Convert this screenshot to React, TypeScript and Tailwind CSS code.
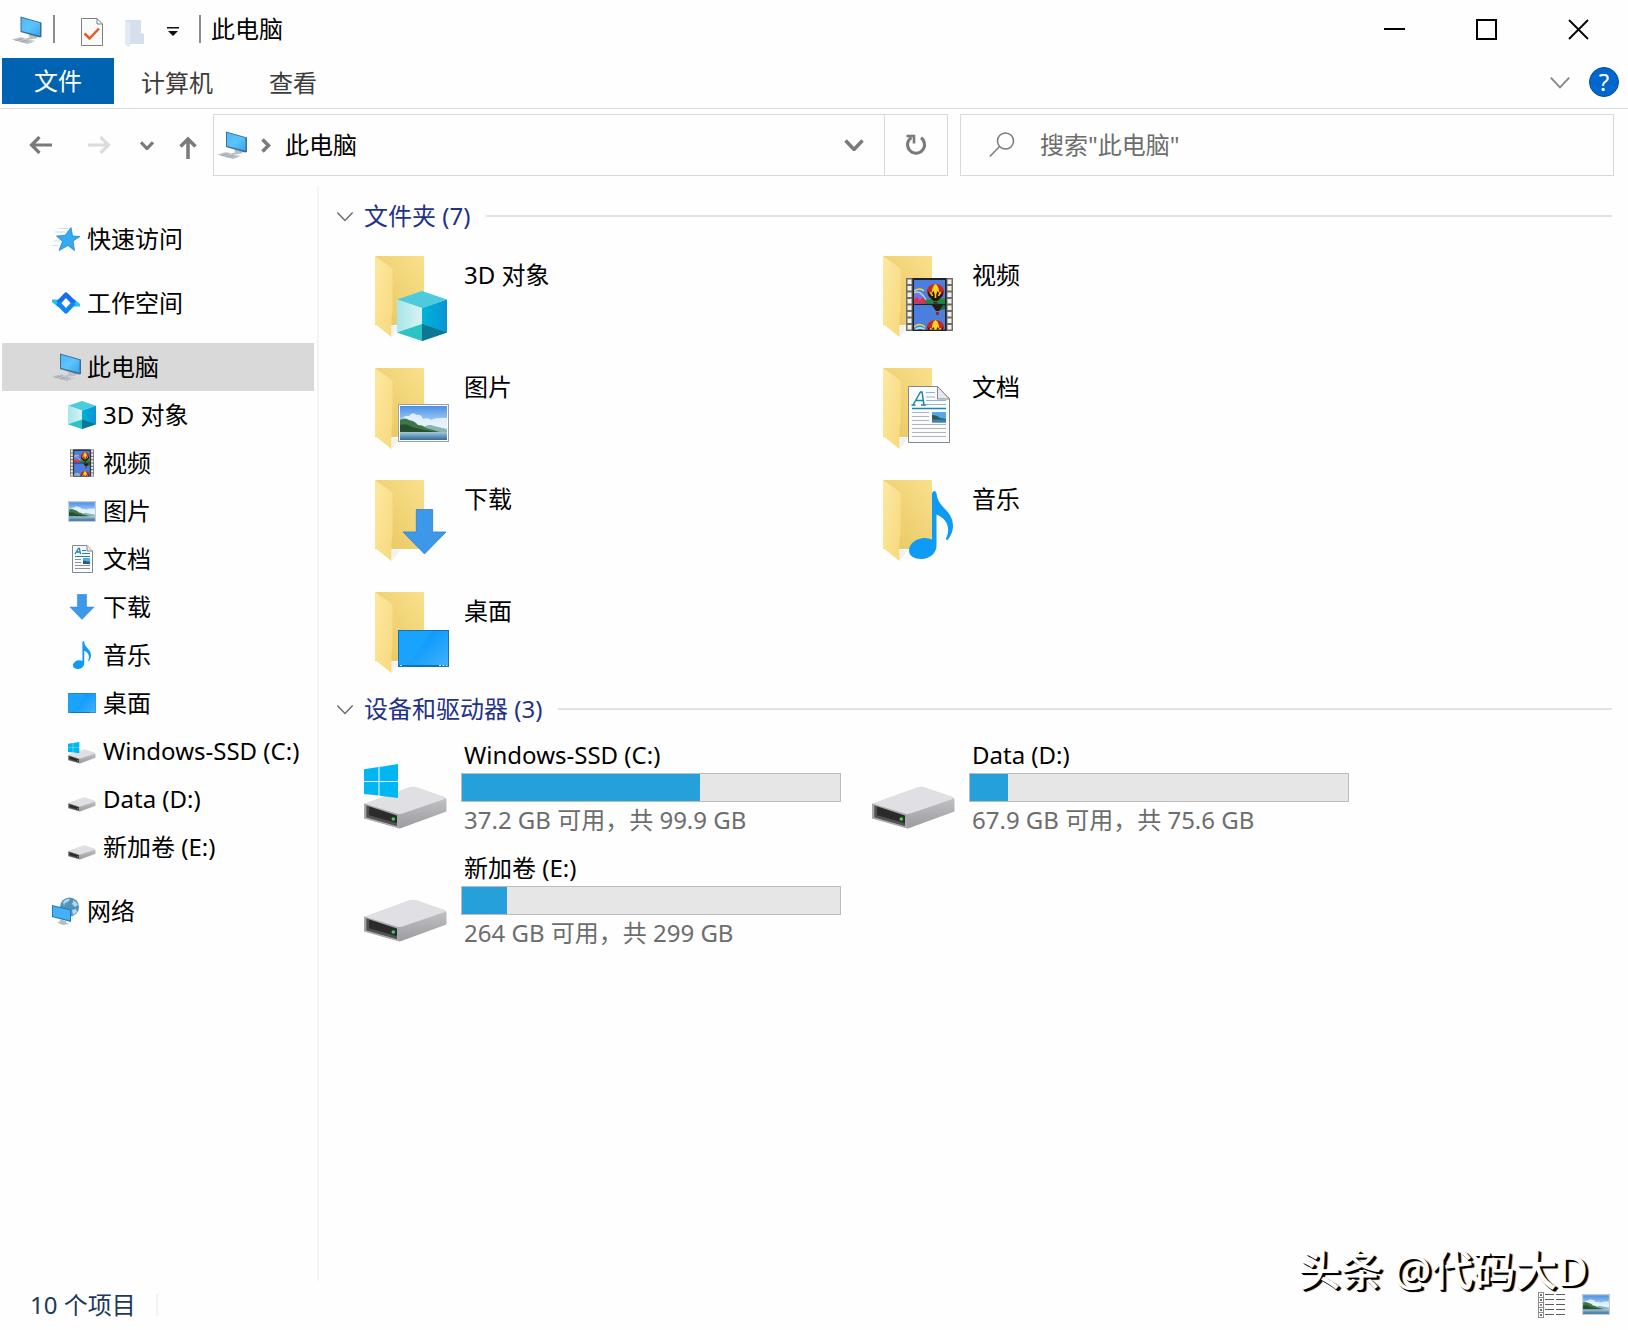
import type { ReactNode, SVGProps } from "react";

type Glyph = (props: SVGProps<SVGSVGElement>) => ReactNode;

// --- Glyphs -------------------------------------------------------------------

function PcGlyph(props: SVGProps<SVGSVGElement>) {
  return (
    <svg viewBox="0 0 30 28" {...props}>
      <defs>
        <linearGradient id="pc-screen" x1="0" y1="0" x2="1" y2="1">
          <stop offset="0" stopColor="#4fb8f7" />
          <stop offset="0.5" stopColor="#5cc4fb" />
          <stop offset="1" stopColor="#36a3ee" />
        </linearGradient>
      </defs>
      <path d="M17 18.500l9 2-1 2-8 1-3-1 4-1z" fill="#b9bfc4" />
      <path d="M9 .5l21 6V21l-2 .5-19-5.500z" fill="#3d6f93" />
      <path d="M10 1.800L28.500 7v12.800L10 15z" fill="url(#pc-screen)" />
      <path d="M0 23.500L9 21l15 4-8 3z" fill="#c9cdd1" />
      <path d="M3 23.700l14 3.600M6 22.800l14 3.600M4 24.700l8-2.400M9 26.100l8-2.400" stroke="#8f979e" strokeWidth=".5" />
    </svg>
  );
}

function CubeGlyph(props: SVGProps<SVGSVGElement>) {
  return (
    <svg viewBox="0 0 50 50" {...props}>
      <defs>
        <linearGradient id="cube-right" x1="0" y1="0" x2="1" y2="0">
          <stop offset="0" stopColor="#00b4d8" />
          <stop offset="1" stopColor="#0a93d6" />
        </linearGradient>
        <linearGradient id="cube-left" x1="0" y1="0" x2="1" y2="0">
          <stop offset="0" stopColor="#a6e6ea" />
          <stop offset="1" stopColor="#d8f3f2" />
        </linearGradient>
      </defs>
      <path d="M25 0l25 8.500L25 17 0 8.500z" fill="#4ccbdc" />
      <path d="M0 8.500L25 17v33L0 41.500z" fill="url(#cube-left)" />
      <path d="M50 8.500L25 17v33l25-8.500z" fill="url(#cube-right)" />
      <path d="M0 41.500L25 33v17z" fill="#2cc3c7" />
      <path d="M50 41.500L25 33v17z" fill="#0b7794" />
    </svg>
  );
}

function Balloon({ x, y }: { x: number; y: number }) {
  return (
    <g transform={`translate(${x} ${y})`}>
      <path d="M0 0c6 0 8.500 4 8.500 8S4 14 2.500 17h-5C-4 14-8.500 12-8.500 8S-6 0 0 0z" fill="#c8281e" />
      <path d="M0 0c4 2 5 11 1.500 17h-3C-5 11-4 2 0 0z" fill="#ffd21f" />
      <path d="M-8 6l3 5 3-4 2 5 2-5 3 4 3-5-1 6-5 5h-4l-5-5z" fill="#231714" />
      <path d="M-5 8l2 4M0 7v7M5 8l-2 4" stroke="#ffc928" strokeWidth="1.600" />
      <path d="M-2 18h4v3h-4z" fill="#3a1d12" />
    </g>
  );
}

function FilmGlyph(props: SVGProps<SVGSVGElement>) {
  const holes = [1.5, 8, 14.5, 21, 27.5, 34, 40.500, 47];
  return (
    <svg viewBox="0 0 47 53" {...props}>
      <rect width="47" height="53" fill="#6e6e6e" />
      <rect x="6.500" width="34" height="53" fill="#1e2226" />
      {holes.map((y) => (
        <g key={y} fill="#f3efe4">
          <rect x="1.500" y={y} width="4" height="4.500" />
          <rect x="41.500" y={y} width="4" height="4.500" />
        </g>
      ))}
      <svg x="8" y="2" width="31" height="23.500" viewBox="0 0 31 23.500">
        <rect width="31" height="24" fill="#4a7fe0" />
        <path d="M0 15c4-6 8-4 11 4v5H0z" fill="#8a6bd8" />
        <path d="M0 13q6-4 12 7" stroke="#8ce0e8" strokeWidth="1.500" fill="none" />
        <path d="M0 11q6-4 10 0" stroke="#f5d642" strokeWidth="1.500" fill="none" />
        <path d="M10 20l21-2v6H10z" fill="#1f8a3a" />
        <path d="M0 20l3-3 3 4 3-4 3 4v3H0z" fill="#d8344a" />
        <Balloon x={21.500} y={4} />
      </svg>
      <svg x="8" y="27" width="31" height="24.500" viewBox="0 0 31 24.500">
        <rect width="31" height="25" fill="#4a7fe0" />
        <path d="M17 0h14v4l-8 2z" fill="#1f6a3a" />
        <path d="M18 0h11l-4 6h-3z" fill="#2b1712" />
        <path d="M22 7h3v3h-3z" fill="#9b2a18" />
        <path d="M0 22q6-5 11 0" stroke="#f5d642" strokeWidth="1.500" fill="none" />
        <path d="M1 25q5-4 10 0" stroke="#a7f0d8" strokeWidth="2" fill="none" />
        <Balloon x={21.500} y={15} />
      </svg>
    </svg>
  );
}

function PhotoGlyph(props: SVGProps<SVGSVGElement>) {
  return (
    <svg viewBox="0 0 51 38" {...props}>
      <defs>
        <linearGradient id="photo-sky" x1="0" y1="0" x2="0" y2="1">
          <stop offset="0" stopColor="#4a90e6" />
          <stop offset="0.600" stopColor="#bfe0fa" />
        </linearGradient>
        <linearGradient id="photo-lake" x1="0" y1="0" x2="0" y2="1">
          <stop offset="0" stopColor="#a4c8dc" />
          <stop offset="1" stopColor="#2f6a98" />
        </linearGradient>
      </defs>
      <rect x=".5" y=".5" width="50" height="37" fill="#fff" stroke="#9ba1ac" />
      <rect x="2" y="2" width="47" height="34" fill="url(#photo-sky)" />
      <path d="M4 16q2-5 7-4 3-5 8-1 4-1 6 4 5-2 8 1 6-3 16-2v14H4z" fill="#eef6fd" opacity=".85" />
      <path d="M22 26q8-7 14-4l13 3v3H22z" fill="#86b5b4" />
      <path d="M2 16q5-3 9 0 6 1 9 5 5 0 8 3l14 4H2z" fill="#3f7548" />
      <path d="M2 21q6-2 12 2l12 3 12 2H2z" fill="#24502f" />
      <path d="M2 28h47v8H2z" fill="url(#photo-lake)" />
    </svg>
  );
}

function DocGlyph(props: SVGProps<SVGSVGElement>) {
  return (
    <svg viewBox="0 0 42 57" {...props}>
      <path d="M.5.5h29l12 12.500v43.500H.5z" fill="#fafbfc" stroke="#85898d" />
      <path d="M29.500.5V13h12z" fill="#e6e8ea" stroke="#85898d" />
      <path d="M5 19L12.500 6h1.500l2 13M7.500 14.500h8M3.500 19h4M13 19h5" fill="none" stroke="#1c84b8" strokeWidth="1.500" />
      <path d="M18 6.500h9M18 11h9M18 14.500h20M18 18.500h20" stroke="#8fb6d4" />
      <path d="M4 22.500h34" stroke="#1c84b8" strokeWidth="1.500" />
      <path d="M4 26.500h17M4 30.500h17M4 34.500h17M4 38.500h34M4 42.500h34M4 46.500h34M4 50.500h34" stroke="#b3b6b9" />
      <rect x="24" y="26" width="14" height="10.500" fill="#57a8e6" />
      <path d="M24 29q5 0 8 3l6 1v1H24z" fill="#2c5c50" />
      <path d="M24 33.500h14v3H24z" fill="#3f81ad" />
    </svg>
  );
}

// Fewer, heavier lines so the page still reads at tree size
function SmallDocGlyph(props: SVGProps<SVGSVGElement>) {
  return (
    <svg viewBox="0 0 21 28" {...props}>
      <path d="M.5.5H15l5.500 5.500v21.500H.5z" fill="#fafbfc" stroke="#85898d" />
      <path d="M15 .5V6h5.500" fill="#e6e8ea" stroke="#85898d" />
      <path d="M3 9l3.500-5.500h1L8.500 9M4.500 7h4" fill="none" stroke="#1c84b8" strokeWidth="1.300" />
      <path d="M10 5.500h4M10 8.500h8M3 11.500h15" stroke="#1c84b8" />
      <path d="M3 14.500h6M3 17.500h6M3 20.500h15M3 23.500h15" stroke="#8d9297" />
      <rect x="11" y="13" width="7" height="6" fill="#57a8e6" />
      <path d="M11 15.500l7 1.500v2h-7z" fill="#2c5c70" />
    </svg>
  );
}

function DownloadGlyph(props: SVGProps<SVGSVGElement>) {
  return (
    <svg viewBox="0 0 44 45" {...props}>
      <path d="M14 .5h16v22h13L22 44 1 22.500h13z" fill="#3d98ea" stroke="#2f7fd0" strokeWidth=".8" />
    </svg>
  );
}

function MusicGlyph(props: SVGProps<SVGSVGElement>) {
  return (
    <svg viewBox="0 0 44 68" {...props}>
      <path
        d="M23 2q2.500-4 4.500 0c1 15 16.500 17 16.500 33 0 6-3 11-5.500 14q-2 0-1.500-1.500c5-10 1-20-9.500-24V55c0 7-7 13-15 13C5 68 0 65 0 59.500 0 52 8 47 16 47q4 0 7 1.500z"
        fill="#0d9bf6"
      />
    </svg>
  );
}

function DesktopGlyph(props: SVGProps<SVGSVGElement>) {
  return (
    <svg viewBox="0 0 51 37" {...props}>
      <defs>
        <linearGradient id="desktop-glare" x1="0" y1="0" x2="1" y2="1">
          <stop offset="0.2" stopColor="#0497fc" />
          <stop offset="1" stopColor="#40b0fc" />
        </linearGradient>
      </defs>
      <rect width="51" height="37" fill="#1272b8" />
      <rect x="1" y="1" width="49" height="34" fill="#1aa3fd" />
      <path d="M34 1h16v34H11z" fill="url(#desktop-glare)" />
      <path d="M2 35.500h2M41 35.500h2M44.500 35.500h2M48 35.500h1.500" stroke="#d6edfc" />
    </svg>
  );
}

function DriveGlyph(props: SVGProps<SVGSVGElement>) {
  return (
    <svg viewBox="0 0 84 66" {...props}>
      <defs>
        <linearGradient id="drive-side" x1="0" y1="0" x2="0" y2="1">
          <stop offset="0" stopColor="#cfcfd1" />
          <stop offset="1" stopColor="#9c9ca0" />
        </linearGradient>
      </defs>
      <path d="M0 40L46 23.200q3-1 6 0L80 33q2.500 1 2.500 3v11.500L36 64.500 0 54z" fill="url(#drive-side)" />
      <path d="M0 40L46 23.200q3-1 6 0L80 33q2 1 0 2.200L40 49q-4 1.500-7 .8z" fill="#e0e0e4" />
      <path d="M0 39.500l35.500 11V64.500L0 54.500z" fill="#a9a9ab" />
      <path d="M2.500 41.500L33 51.500v10.500L2.500 53.300z" fill="#2b2b2b" />
      <path d="M2.500 41.500L5 42.300v9l28 8V62L2.500 53.300z" fill="#6d6d6d" opacity=".6" />
      <circle cx="29.300" cy="55" r="1.800" fill="#3fd84a" />
    </svg>
  );
}

function SystemDriveGlyph(props: SVGProps<SVGSVGElement>) {
  return (
    <svg viewBox="0 0 84 66" {...props}>
      <DriveGlyph width="84" height="66" />
      <path d="M0 5.300L14.500 3v14H0zM15.500 2.900L34 0v17H15.500zM0 18h14.500v13.600L0 30zM15.500 18H34v16l-18.500-2.300z" fill="#00b7f1" />
    </svg>
  );
}

function StarGlyph(props: SVGProps<SVGSVGElement>) {
  return (
    <svg viewBox="0 0 28 24" {...props}>
      <path d="M7 1.500h9M3 5h10M2 14h6M1 18.500h5" stroke="#b5ddf6" strokeWidth=".9" />
      <path d="M19 .5l1.500 8.500 7.500.500-7 4.500 1.500 9.500-6.500-5-9 5 3.500-9L4.500 9l8.500-.5z" fill="#35aaf0" stroke="#1e86cc" strokeWidth=".8" />
    </svg>
  );
}

function WorkspaceGlyph(props: SVGProps<SVGSVGElement>) {
  return (
    <svg viewBox="0 0 28 22" {...props}>
      <path d="M0 7.500h7l2.500 3.500-3.500 4L0 10z" fill="#27c3ee" />
      <path d="M28 14.500h-7L18.500 11 22 7l6 5z" fill="#27c3ee" />
      <path d="M4.500 9.500L12.500 1Q14-.5 15.500 1L24 9.500 20.500 13 14 6l-6 6.500z" fill="#176cf3" />
      <path d="M23.500 12.500L15.500 21q-1.500 1.500-3 0L4 12.500 7.500 9l6.500 7 6-6.500z" fill="#1585f6" />
    </svg>
  );
}

function NetworkGlyph(props: SVGProps<SVGSVGElement>) {
  return (
    <svg viewBox="0 0 28 28" {...props}>
      <circle cx="17.500" cy="10" r="9.500" fill="#4f93bb" />
      <path d="M11 5q3-4 7-3l-2 3-3 1-1 3zM21 3q4 2 5 5l-3 2-3-3 1-2zM20 13l4-1 1 3-4 3z" fill="#b5d9e6" />
      <path d="M0 8l19 4.500V25L0 20z" fill="#2776b5" />
      <path d="M1 9.300l17 4v10.300L1 19.200z" fill="#45b0f6" />
      <path d="M8 22.500v2l-3 1 6 2.500 6-1-3-1.500v-1.500z" fill="#b5bbc0" />
    </svg>
  );
}

function DetailsGlyph(props: SVGProps<SVGSVGElement>) {
  const rows = [3, 8, 13, 18, 23];
  return (
    <svg viewBox="0 0 28 26" {...props}>
      {rows.map((y) => (
        <g key={y}>
          <rect x=".5" y={y - 2.500} width="5" height="5" fill="#fff" stroke="#8b8b8b" />
          <rect x="2.200" y={y - 0.800} width="1.600" height="1.600" fill={y === 13 ? "#a02a2a" : "#222"} />
          <path d={`M7 ${y - 0.500}h9M18 ${y - 0.500}h9`} stroke="#5d5d5d" />
        </g>
      ))}
    </svg>
  );
}

function Chevron(props: SVGProps<SVGSVGElement>) {
  return (
    <svg viewBox="0 0 20 12" fill="none" stroke="currentColor" {...props}>
      <path d="M1.500 1.500L10 10.500l8.500-9" />
    </svg>
  );
}

// Open folder with a badge over its lower right corner
function FolderIcon({ children }: { children: ReactNode }) {
  return (
    <svg viewBox="0 0 88 88" className="h-22 w-22 shrink-0">
      <defs>
        <linearGradient id="folder-back" x1="0" y1="1" x2="1" y2="0">
          <stop offset="0" stopColor="#e8c65e" />
          <stop offset="1" stopColor="#fae08c" />
        </linearGradient>
        <linearGradient id="folder-flap" x1="0" y1="0" x2="1" y2="1">
          <stop offset="0" stopColor="#fde9a2" />
          <stop offset="1" stopColor="#f7d97c" />
        </linearGradient>
      </defs>
      <path d="M28 72h8l-8 11z" fill="#f1f1f1" />
      <path d="M11 2h49v69H11z" fill="url(#folder-back)" />
      <path d="M11 2l17.500 12.500v43.500L27.500 62v21L11 70z" fill="url(#folder-flap)" />
      {children}
    </svg>
  );
}

// --- Data ---------------------------------------------------------------------

interface TreeItem {
  label: string;
  icon: Glyph;
  size: string;
  nested?: boolean;
  selected?: boolean;
  spaced?: boolean;
}

const TREE: TreeItem[] = [
  { label: "快速访问", icon: StarGlyph, size: "h-6 w-7" },
  { label: "工作空间", icon: WorkspaceGlyph, size: "h-[22px] w-7", spaced: true },
  { label: "此电脑", icon: PcGlyph, size: "h-7 w-[30px]", spaced: true, selected: true },
  { label: "3D 对象", icon: CubeGlyph, size: "h-7 w-7", nested: true },
  { label: "视频", icon: FilmGlyph, size: "h-7 w-6", nested: true },
  { label: "图片", icon: PhotoGlyph, size: "h-[21px] w-7", nested: true },
  { label: "文档", icon: SmallDocGlyph, size: "h-7 w-[21px]", nested: true },
  { label: "下载", icon: DownloadGlyph, size: "h-[26px] w-[26px]", nested: true },
  { label: "音乐", icon: MusicGlyph, size: "h-7 w-[18px]", nested: true },
  { label: "桌面", icon: DesktopGlyph, size: "h-5 w-7", nested: true },
  { label: "Windows-SSD (C:)", icon: SystemDriveGlyph, size: "mt-1 h-[22px] w-7", nested: true },
  { label: "Data (D:)", icon: DriveGlyph, size: "mt-1 h-[22px] w-7", nested: true },
  { label: "新加卷 (E:)", icon: DriveGlyph, size: "mt-1 h-[22px] w-7", nested: true },
  { label: "网络", icon: NetworkGlyph, size: "h-7 w-7", spaced: true },
];

const FOLDERS = [
  { label: "3D 对象", badge: <CubeGlyph x="33" y="37" width="50" height="50" /> },
  { label: "视频", badge: <FilmGlyph x="34" y="24" width="47" height="53" /> },
  { label: "图片", badge: <PhotoGlyph x="34" y="38" width="51" height="38" /> },
  { label: "文档", badge: <DocGlyph x="36" y="20" width="42" height="57" /> },
  { label: "下载", badge: <DownloadGlyph x="38" y="31" width="45" height="46" /> },
  { label: "音乐", badge: <MusicGlyph x="37" y="13" width="44" height="68" /> },
  { label: "桌面", badge: <DesktopGlyph x="34" y="40" width="51" height="37" /> },
];

const DRIVES = [
  { label: "Windows-SSD (C:)", icon: SystemDriveGlyph, used: 63, detail: "37.2 GB 可用，共 99.9 GB" },
  { label: "Data (D:)", icon: DriveGlyph, used: 10, detail: "67.9 GB 可用，共 75.6 GB" },
  { label: "新加卷 (E:)", icon: DriveGlyph, used: 12, detail: "264 GB 可用，共 299 GB" },
];

// --- Window chrome ------------------------------------------------------------

function TitleBar() {
  return (
    <header className="flex h-[58px] items-center pl-[11px]">
      <PcGlyph className="mt-0.5 h-7 w-[31px]" />
      <div className="ml-[11px] h-7 w-0.5 bg-[#8c8c8c]" />
      <button type="button" aria-label="属性" className="ml-[26px]">
        <svg viewBox="0 0 22 28" className="mt-1.5 h-7 w-[22px]" fill="none">
          <path d="M.5.5h15.500l5.500 5.500v21.500H.5z" fill="#f8fafc" stroke="#7d8083" />
          <path d="M16 .5V6h5.500" stroke="#7d8083" />
          <path d="M3.500 15.500l5 5L18 10.500" stroke="#e8591c" strokeWidth="2.500" />
        </svg>
      </button>
      <button type="button" aria-label="新建文件夹" className="ml-[22px]">
        <svg viewBox="0 0 19 27" className="mt-2 h-[27px] w-[19px]">
          <path d="M0 0h16v13l3 1v10H5l-1 3-4-3z" fill="#d5dfee" />
          <path d="M0 0l5 3v23l-5-2z" fill="#e3eaf5" />
        </svg>
      </button>
      <button type="button" aria-label="自定义快速访问工具栏" className="ml-[23px]">
        <svg viewBox="0 0 12 10" className="mt-1.5 h-2.5 w-3">
          <path d="M0 0h12v1.500H0zM1 4h10L6 9z" fill="#111" />
        </svg>
      </button>
      <div className="ml-5 h-7 w-0.5 bg-[#8c8c8c]" />
      <h1 className="ml-2.5">此电脑</h1>
      <div className="ml-auto flex items-center gap-[71px] pr-[39px]">
        <button type="button" aria-label="最小化">
          <svg viewBox="0 0 21 21" className="h-[21px] w-[21px]">
            <path d="M0 10h21" stroke="#000" strokeWidth="2" />
          </svg>
        </button>
        <button type="button" aria-label="最大化">
          <svg viewBox="0 0 21 21" className="h-[21px] w-[21px]">
            <rect x="1" y="1" width="19" height="19" fill="none" stroke="#000" strokeWidth="2" />
          </svg>
        </button>
        <button type="button" aria-label="关闭">
          <svg viewBox="0 0 21 21" className="h-[21px] w-[21px]">
            <path d="M1 1l19 19M20 1L1 20" stroke="#000" strokeWidth="1.800" />
          </svg>
        </button>
      </div>
    </header>
  );
}

function RibbonTabs() {
  return (
    <div className="flex h-[51px] items-start border-b border-[#dadbdc] pl-0.5 text-[#3c3c3c]">
      <button type="button" className="h-[46px] w-28 bg-[#0063b1] text-white">
        文件
      </button>
      <button type="button" className="ml-[27px] h-[50px]">
        计算机
      </button>
      <button type="button" className="ml-14 h-[50px]">
        查看
      </button>
      <div className="ml-auto flex h-12 items-center gap-[18px] pr-[9px]">
        <button type="button" aria-label="展开功能区" className="text-[#8a8a8a]">
          <Chevron className="h-[13px] w-[22px]" strokeWidth="1.800" />
        </button>
        <button
          type="button"
          aria-label="帮助"
          className="h-[30px] w-[30px] rounded-full border border-[#0a4d94] bg-[#0067cf] text-[24px] leading-7 text-white"
        >
          ?
        </button>
      </div>
    </div>
  );
}

function AddressBar() {
  return (
    <div className="grid h-[62px] grid-cols-[201px_minmax(0,735fr)_minmax(0,654fr)] gap-3 pr-3.5 text-[#7a7a7a]">
      <div className="flex items-center pl-[29px]">
        <button type="button" aria-label="后退">
          <svg viewBox="0 0 23 18" className="h-[18px] w-[23px]" fill="none" stroke="currentColor" strokeWidth="3.200">
            <path d="M23 9H2M10.500 1L2.500 9l8 8" />
          </svg>
        </button>
        <button type="button" aria-label="前进" className="ml-9 text-[#dcdcdc]">
          <svg viewBox="0 0 23 18" className="h-[18px] w-[23px]" fill="none" stroke="currentColor" strokeWidth="3.200">
            <path d="M0 9h21M12.500 1l8 8-8 8" />
          </svg>
        </button>
        <button type="button" aria-label="最近浏览的位置" className="ml-[29px]">
          <Chevron className="h-[9px] w-3.5" strokeWidth="4.500" />
        </button>
        <button type="button" aria-label="上移" className="ml-[25px]">
          <svg viewBox="0 0 18 23" className="mt-1 h-[23px] w-[18px]" fill="none" stroke="currentColor" strokeWidth="3.500">
            <path d="M9 23V3M1.500 10.500L9 3l7.500 7.500" />
          </svg>
        </button>
      </div>

      <div className="flex border border-[#d9d9d9]">
        <div className="flex min-w-0 flex-1 items-center pl-[3px]">
          <PcGlyph className="h-7 w-[30px]" />
          <svg viewBox="0 0 10 15" className="ml-[14px] h-[15px] w-2.5" fill="none" stroke="currentColor" strokeWidth="3.500">
            <path d="M1.500 1.500l6 6-6 6" />
          </svg>
          <button type="button" className="ml-3.5 text-black">
            此电脑
          </button>
          <button type="button" aria-label="以前的位置" className="mr-5 ml-auto">
            <Chevron className="h-3 w-5" strokeWidth="3.500" />
          </button>
        </div>
        <button type="button" aria-label="刷新" className="flex w-[63px] items-center justify-center border-l border-[#d9d9d9]">
          <svg viewBox="0 0 22 22" className="h-[22px] w-[22px]" fill="none" stroke="currentColor" strokeWidth="3">
            <path d="M16 3.800a8.500 8.500 0 1 1-9.500-.3" />
            <path d="M1.500 2H9v7.500" strokeWidth="2.600" />
          </svg>
        </button>
      </div>

      <label className="flex items-center border border-[#d9d9d9] pl-7">
        <svg viewBox="0 0 26 26" className="h-[26px] w-[26px] shrink-0" fill="none" stroke="currentColor" strokeWidth="1.500">
          <circle cx="16.500" cy="9" r="8" />
          <path d="M10.500 14.500L.8 24.500" />
        </svg>
        <input
          type="search"
          aria-label="搜索"
          placeholder={'搜索"此电脑"'}
          className="ml-[25px] min-w-0 flex-1 bg-transparent outline-none placeholder:text-[#6d6d6d]"
        />
      </label>
    </div>
  );
}

// --- Sidebar ------------------------------------------------------------------

function Sidebar() {
  return (
    <nav className="w-[319px] shrink-0 border-r-2 border-[#f4f4f4] pt-[29px] pr-[3px] pl-0.5">
      {TREE.map(({ label, icon: Icon, size, nested, selected, spaced }) => (
        <a
          key={label}
          href="#"
          className={`flex h-12 items-center whitespace-nowrap ${nested ? "pl-[66px]" : "pl-[50px]"} ${
            spaced ? "mt-4" : ""
          } ${selected ? "bg-[#d9d9d9]" : ""}`}
        >
          <span className="flex w-7 shrink-0 items-center justify-center">
            <Icon className={`shrink-0 ${size}`} />
          </span>
          <span className="ml-[7px]">{label}</span>
        </a>
      ))}
    </nav>
  );
}

// --- Main pane ----------------------------------------------------------------

function GroupHeader({ title }: { title: string }) {
  return (
    <div className="flex h-8 items-center text-[#1e3287]">
      <button type="button" aria-label={title} aria-expanded className="text-[#6b6b6b]">
        <Chevron className="h-[11px] w-[18px]" strokeWidth="1.600" />
      </button>
      <h2 className="ml-2.5">{title}</h2>
      <div className="ml-4 h-0.5 flex-1 bg-[#e2e2e2]" />
    </div>
  );
}

function UsageBar({ label, used }: { label: string; used: number }) {
  return (
    <div
      role="meter"
      aria-label={label}
      aria-valuenow={used}
      aria-valuemin={0}
      aria-valuemax={100}
      className="mt-0.5 h-[29px] border border-[#bcbcbc] bg-[#e6e6e6]"
    >
      <div className="h-full bg-[#26a0da]" style={{ width: `${used}%` }} />
    </div>
  );
}

function MainPane() {
  return (
    <main className="min-w-0 flex-1 pt-3.5 pr-4 pl-[17px]">
      <GroupHeader title="文件夹 (7)" />
      <div className="mt-[22px] grid grid-cols-[repeat(auto-fill,508px)] gap-y-6 pl-7">
        {FOLDERS.map(({ label, badge }) => (
          <a key={label} href="#" className="flex h-22 gap-3">
            <FolderIcon>{badge}</FolderIcon>
            <span className="pt-[5px]">{label}</span>
          </a>
        ))}
      </div>

      <div className="mt-[15px]">
        <GroupHeader title="设备和驱动器 (3)" />
      </div>
      <div className="mt-3.5 grid grid-cols-[repeat(auto-fill,508px)] gap-y-4 pl-7">
        {DRIVES.map(({ label, icon: Icon, used, detail }) => (
          <a key={label} href="#" className="flex gap-[13px]">
            <Icon className="mt-[25px] h-[66px] w-[84px] shrink-0" />
            <div className="w-[380px]">
              <div className="pl-[3px]">{label}</div>
              <UsageBar label={label} used={used} />
              <div className="mt-0.5 pl-[3px] text-[#6d6d6d]">{detail}</div>
            </div>
          </a>
        ))}
      </div>
    </main>
  );
}

function StatusBar() {
  return (
    <footer className="relative flex h-[49px] items-center pr-[18px] pb-0.5 pl-[30px] text-[#1e395b]">
      <span>10 个项目</span>
      <div className="ml-5 h-[22px] w-0.5 bg-[#f2f2f2]" />
      <div className="ml-auto flex items-center gap-4">
        <button type="button" aria-label="详细信息">
          <DetailsGlyph className="h-[26px] w-7" />
        </button>
        <button type="button" aria-label="大缩略图">
          <PhotoGlyph className="h-[21px] w-7" />
        </button>
      </div>
      <span className="absolute right-10 bottom-8 text-[42px] leading-[56px] font-medium whitespace-nowrap text-white [text-shadow:1px_1px_0_#000,2px_2px_0_#000,3px_2px_1px_#000]">
        头条 @代码大D
      </span>
    </footer>
  );
}

export default function App() {
  return (
    <div className="flex min-h-screen flex-col bg-[#fefefe] font-['Noto_Sans','Noto_Sans_CJK_SC',sans-serif] text-[24px] leading-8 text-black">
      <TitleBar />
      <RibbonTabs />
      <div className="pt-[5px]">
        <AddressBar />
      </div>
      <div className="mt-2.5 flex flex-1">
        <Sidebar />
        <MainPane />
      </div>
      <StatusBar />
    </div>
  );
}
